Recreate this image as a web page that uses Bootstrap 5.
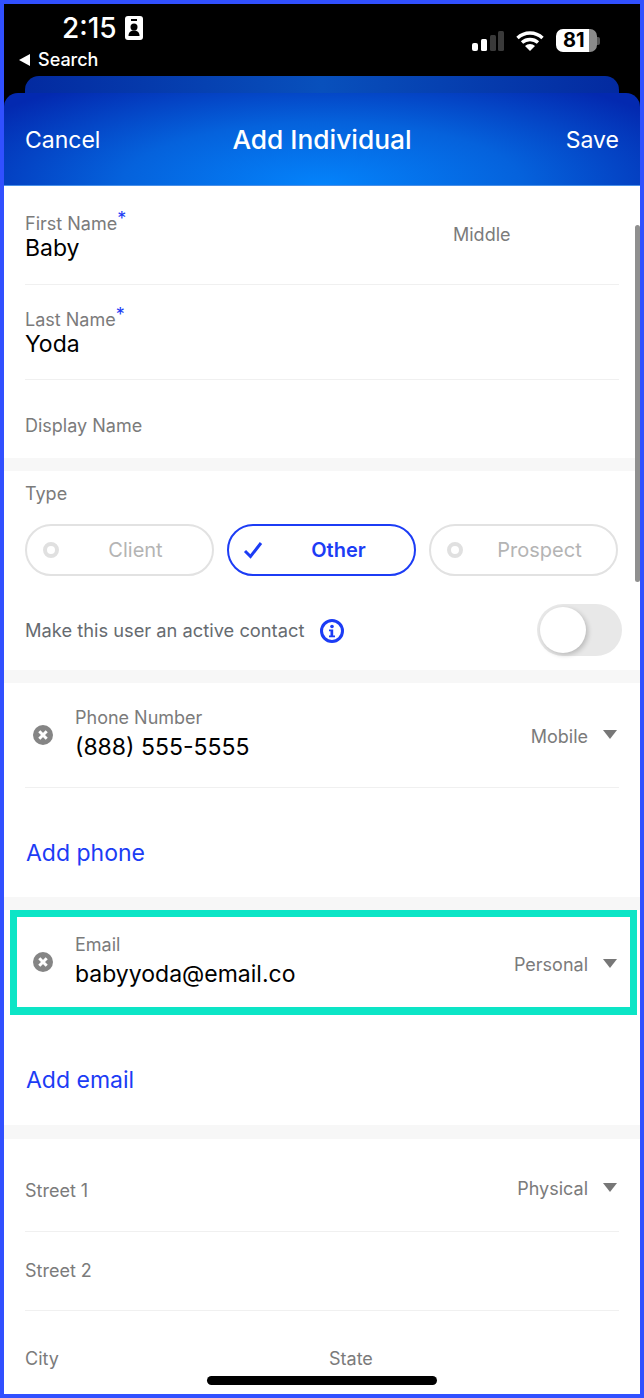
<!DOCTYPE html>
<html lang="en">

<head>
    <meta charset="UTF-8">
    <meta name="viewport" content="width=device-width, initial-scale=1.0">
    <title>Add Individual</title>
    <link href="https://cdn.jsdelivr.net/npm/bootstrap@5.3.0/dist/css/bootstrap.min.css" rel="stylesheet">
    <style>
        body {
            font-family: Inter, "Liberation Sans", sans-serif;
            background: #fff;
        }

        .phone-frame {
            width: 644px;
            height: 1398px;
            border: 4px solid #3150ff;
            position: relative;
            overflow: hidden;
            background: #fff;
        }

        .status-bar {
            height: 72px;
            background: #000;
            color: #fff;
            padding: 0 40px 0 15px;
        }

        .status-time {
            font-size: 28px;
            font-weight: 500;
            line-height: 32px;
            margin: 8px 0 0 43px;
        }

        .status-back {
            font-size: 18px;
            font-weight: 500;
            line-height: 22px;
            margin-top: 5px;
        }

        .status-right {
            margin-top: 25px;
            height: 23px;
            gap: 12px;
        }

        .batt-pill {
            width: 41px;
            height: 23px;
            border-radius: 7px;
            background: linear-gradient(90deg, #fff 80%, #8a8a8a 80%);
            color: #000;
            font-size: 20px;
            font-weight: 700;
            line-height: 23px;
            padding-left: 7px;
        }

        .batt-nub {
            width: 3px;
            height: 8px;
            border-radius: 0 2px 2px 0;
            background: #555;
        }

        .back-sheet-wrap {
            background: #000;
            height: 17px;
            padding: 0 21px;
        }

        .back-sheet {
            height: 17px;
            border-radius: 14px 14px 0 0;
            background: linear-gradient(90deg, #032aa0, #0850bc 50%, #032aa0);
        }

        .sheet-wrap {
            background: #000;
        }

        .sheet-head {
            height: 93px;
            border-radius: 14px 14px 0 0;
            border-bottom: 1px solid #4a90e8;
            background: radial-gradient(ellipse 400px 125px at 50% 100%, #0483fb 0%, #0562dc 50%, #0329b0 100%);
            color: #fff;
            padding: 2px 21px 0;
            font-size: 23px;
        }

        .head-side {
            flex: 1;
        }

        .sheet-title {
            font-size: 26.3px;
            font-weight: 500;
        }

        .form-band {
            background: #fff;
            padding: 0 21px;
        }

        .band-gap {
            height: 13px;
            background: #f7f7f7;
        }

        .band-gap.wide-gap {
            height: 14px;
        }

        .field-row {
            border-bottom: 1px solid #f0f0f0;
        }

        .field-row.last-row {
            border-bottom: 0;
        }

        .field-label {
            font-size: 18px;
            line-height: 22px;
            color: #7b7b7b;
        }

        .field-value {
            font-size: 23px;
            line-height: 28px;
            color: #000;
        }

        .req-star {
            color: #1c3cf5;
            position: relative;
            top: -5px;
        }

        .h-name {
            height: 99px;
            padding-top: 27px;
        }

        .h-last {
            height: 95px;
            padding-top: 24px;
        }

        .h-name .field-value,
        .h-last .field-value {
            margin-top: -1px;
        }

        .h-display {
            height: 78px;
            padding-top: 35px;
        }

        .middle-label {
            margin-left: 428px;
            margin-top: 11px;
            position: absolute;
        }

        .type-block {
            height: 199px;
            padding-top: 12px;
        }

        .type-pills {
            gap: 13px;
            margin-top: 19px;
        }

        .type-pill {
            width: 189px;
            height: 52px;
            border: 2px solid #e2e2e2;
            border-radius: 26px;
            font-size: 20px;
            color: #b4b4b4;
            padding-left: 16px;
        }

        .type-pill.is-on {
            border-color: #1c3cf5;
            color: #1c3cf5;
            font-weight: 600;
            padding-left: 14px;
        }

        .pill-dot {
            width: 16px;
            height: 16px;
            border: 4px solid #e0e0e0;
            border-radius: 50%;
            flex: none;
        }

        .pill-text {
            flex: 1;
            text-align: center;
        }

        .active-row {
            margin-top: 28px;
            height: 52px;
            font-size: 18.3px;
            color: #666b70;
            margin-right: -3px;
        }

        .active-text {
            padding-top: 2px;
        }

        .fake-toggle {
            width: 85px;
            height: 52px;
            background: #e8e8e8;
            border-radius: 26px;
            padding: 3px;
        }

        .fake-knob {
            width: 46px;
            height: 46px;
            background: #fff;
            border-radius: 50%;
            box-shadow: 2px 2px 5px rgba(0, 0, 0, .2);
        }

        .contact-row {
            height: 105px;
        }

        .contact-text {
            padding-bottom: 2px;
        }

        .contact-text .field-value {
            margin-top: 4px;
        }

        .remove-col {
            width: 50px;
            padding-left: 8px;
            flex: none;
        }

        .kind-select {
            font-size: 18px;
            color: #7b7b7b;
            margin-right: 2px;
            padding-top: 2px;
        }

        .caret-down {
            width: 0;
            height: 0;
            border-left: 7.5px solid transparent;
            border-right: 7.5px solid transparent;
            border-top: 9px solid #777;
            margin-left: 15px;
            margin-top: -3px;
        }

        .add-link {
            height: 109px;
            font-size: 23px;
            color: #1c3cf5;
            padding: 21px 0 0 1px;
        }

        .add-link.tall-link {
            height: 110px;
        }

        .teal-box {
            height: 105px;
            border: 7px solid #0ce5c6;
            border-bottom-width: 8px;
            margin: 0 3px 0 6px;
            padding: 0 11px 0 16px;
            background: #fff;
        }

        .teal-box .remove-col {
            width: 42px;
            padding-left: 0;
        }

        .teal-box .kind-select {
            padding-top: 5px;
        }

        .h-street {
            height: 93px;
        }

        .h-street .field-label {
            padding-top: 11px;
        }

        .h-street .kind-select {
            padding-top: 7px;
        }

        .h-street2 {
            height: 79px;
        }

        .h-city {
            height: 84px;
            padding-top: 12px;
        }

        .state-col {
            margin-left: 304px;
            position: absolute;
        }

        .scroll-thumb {
            position: absolute;
            right: 0;
            top: 221px;
            width: 5px;
            height: 357px;
            border-radius: 3px;
            background: #8f8f8f;
        }

        .home-bar {
            position: absolute;
            left: 203px;
            top: 1372px;
            width: 230px;
            height: 9px;
            border-radius: 5px;
            background: #000;
        }
    </style>
</head>

<body class="m-0">
    <div class="phone-frame">
        <div class="status-bar d-flex justify-content-between">
            <div>
                <div class="status-time d-flex align-items-center gap-2">2:15
                    <svg width="18" height="24" viewBox="0 0 18 24">
                        <rect width="18" height="24" rx="3" fill="#fff" />
                        <rect x="6" y="3" width="6" height="2" fill="#000" />
                        <circle cx="9" cy="11" r="3.5" fill="#000" />
                        <path d="M3.5 20c0-4 2.500-5.500 5.500-5.500s5.500 1.500 5.500 5.500z" fill="#000" />
                    </svg>
                </div>
                <div class="status-back d-flex align-items-center gap-2">
                    <svg width="11" height="12" viewBox="0 0 11 12">
                        <path d="M0 6 11 0v12z" fill="#fff" />
                    </svg>Search
                </div>
            </div>
            <div class="status-right d-flex align-items-center">
                <svg width="32" height="20" viewBox="0 0 32 20">
                    <rect x="0" y="12" width="6" height="8" rx="2" fill="#fff" />
                    <rect x="9" y="8" width="6" height="12" rx="1.500" fill="#fff" />
                    <rect x="18" y="4" width="6" height="16" rx="1.500" fill="#3a3a3a" />
                    <rect x="26" y="0" width="6" height="20" rx="1.500" fill="#3a3a3a" />
                </svg>
                <svg width="28" height="20" viewBox="0 0 28 20">
                    <path d="M1.500 7a18 18 0 0 1 25 0M6 11.500a12 12 0 0 1 16 0" fill="none" stroke="#fff" stroke-width="3.400" />
                    <path d="M14 20 9 15a7 7 0 0 1 10 0z" fill="#fff" />
                </svg>
                <div class="d-flex align-items-center">
                    <div class="batt-pill">81</div>
                    <div class="batt-nub"></div>
                </div>
            </div>
        </div>
        <div class="back-sheet-wrap">
            <div class="back-sheet"></div>
        </div>
        <div class="sheet-wrap">
            <div class="sheet-head d-flex align-items-center">
                <span class="head-side">Cancel</span>
                <span class="sheet-title">Add Individual</span>
                <span class="head-side text-end">Save</span>
            </div>
        </div>

        <div class="form-band">
            <div class="field-row h-name">
                <div class="middle-label field-label">Middle</div>
                <div class="field-label">First Name<span class="req-star">*</span></div>
                <div class="field-value">Baby</div>
            </div>
            <div class="field-row h-last">
                <div class="field-label">Last Name<span class="req-star">*</span></div>
                <div class="field-value">Yoda</div>
            </div>
            <div class="field-row last-row h-display">
                <div class="field-label">Display Name</div>
            </div>
        </div>
        <div class="band-gap"></div>

        <div class="form-band type-block">
            <div class="field-label">Type</div>
            <div class="type-pills d-flex">
                <div class="type-pill d-flex align-items-center">
                    <span class="pill-dot"></span><span class="pill-text">Client</span>
                </div>
                <div class="type-pill is-on d-flex align-items-center">
                    <svg width="20" height="18" viewBox="0 0 20 18" class="flex-shrink-0">
                        <path d="M2 10l5.500 5.500L18 2" fill="none" stroke="#1c3cf5" stroke-width="3" />
                    </svg>
                    <span class="pill-text">Other</span>
                </div>
                <div class="type-pill d-flex align-items-center">
                    <span class="pill-dot"></span><span class="pill-text">Prospect</span>
                </div>
            </div>
            <div class="active-row d-flex align-items-center justify-content-between">
                <div class="active-text d-flex align-items-center gap-3">
                    <span>Make this user an active contact</span>
                    <svg width="24" height="24" viewBox="0 0 24 24">
                        <circle cx="12" cy="12" r="10.500" fill="none" stroke="#1c3cf5" stroke-width="3" />
                        <circle cx="12" cy="7.500" r="1.800" fill="#1c3cf5" />
                        <path d="M9 10.500h4.200v6H15v1.800H9v-1.800h1.500v-4.200H9z" fill="#1c3cf5" />
                    </svg>
                </div>
                <div class="fake-toggle"><div class="fake-knob"></div></div>
            </div>
        </div>
        <div class="band-gap"></div>

        <div class="form-band">
            <div class="field-row contact-row d-flex align-items-center">
                <div class="remove-col">
                    <svg width="20" height="20" viewBox="0 0 20 20" class="d-block">
                        <circle cx="10" cy="10" r="10" fill="#858585" />
                        <path d="M6.300 6.300l7.400 7.400m0-7.400l-7.400 7.400" stroke="#fff" stroke-width="3" />
                    </svg>
                </div>
                <div class="flex-grow-1 contact-text">
                    <div class="field-label">Phone Number</div>
                    <div class="field-value">(888) 555-5555</div>
                </div>
                <div class="kind-select d-flex align-items-center">Mobile<span class="caret-down"></span></div>
            </div>
            <div class="add-link d-flex align-items-center">Add phone</div>
        </div>
        <div class="band-gap"></div>

        <div class="teal-box d-flex align-items-center">
            <div class="remove-col">
                <svg width="20" height="20" viewBox="0 0 20 20" class="d-block">
                    <circle cx="10" cy="10" r="10" fill="#858585" />
                    <path d="M6.300 6.300l7.400 7.400m0-7.400l-7.400 7.400" stroke="#fff" stroke-width="3" />
                </svg>
            </div>
            <div class="flex-grow-1 contact-text">
                <div class="field-label">Email</div>
                <div class="field-value">babyyoda@email.co</div>
            </div>
            <div class="kind-select d-flex align-items-center">Personal<span class="caret-down"></span></div>
        </div>
        <div class="form-band">
            <div class="add-link tall-link d-flex align-items-center">Add email</div>
        </div>
        <div class="band-gap wide-gap"></div>

        <div class="form-band">
            <div class="field-row h-street d-flex align-items-center justify-content-between">
                <div class="field-label">Street 1</div>
                <div class="kind-select d-flex align-items-center">Physical<span class="caret-down"></span></div>
            </div>
            <div class="field-row h-street2 d-flex align-items-center">
                <div class="field-label">Street 2</div>
            </div>
            <div class="field-row last-row h-city d-flex align-items-center">
                <div class="field-label">City</div>
                <div class="field-label state-col">State</div>
            </div>
        </div>

        <div class="scroll-thumb"></div>
        <div class="home-bar"></div>
    </div>
    <script src="https://cdn.jsdelivr.net/npm/bootstrap@5.3.0/dist/js/bootstrap.bundle.min.js"></script>
</body>

</html>
